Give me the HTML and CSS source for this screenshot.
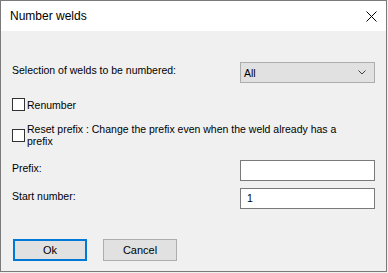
FILE: index.html
```html
<!DOCTYPE html>
<html lang="en">
<head>
    <meta charset="UTF-8">
    <title>Number welds</title>
    <link rel="stylesheet" href="styles.css">
</head>
<body>
    <div class="dialog">
        <div class="title-bar">
            <span class="title">Number welds</span>
            <svg class="close-btn" width="11" height="11" viewBox="0 0 11 11">
                <path d="M0.5 0.5 L10.5 10.5 M10.5 0.5 L0.5 10.5" stroke="#000" stroke-width="1" fill="none"/>
            </svg>
        </div>

        <div class="content">
            <div class="field-row select-row">
                <label class="field-label">Selection of welds to be numbered:</label>
                <div class="combo">
                    <span>All</span>
                    <svg class="chevron" width="8" height="5" viewBox="0 0 8 5">
                        <path d="M0.5 0.5 L4 4 L7.5 0.5" stroke="#404040" stroke-width="1" fill="none"/>
                    </svg>
                </div>
            </div>

            <div class="check-row first-check">
                <span class="check-box"></span>
                <span class="check-text">Renumber</span>
            </div>

            <div class="check-row second-check">
                <span class="check-box"></span>
                <span class="check-text">Reset prefix : Change the prefix even when the weld already has a prefix</span>
            </div>

            <div class="field-row prefix-row">
                <label class="field-label">Prefix:</label>
                <div class="text-input"></div>
            </div>

            <div class="field-row start-row">
                <label class="field-label">Start number:</label>
                <div class="text-input">1</div>
            </div>

            <div class="buttons">
                <button class="btn btn-default">Ok</button>
                <button class="btn">Cancel</button>
            </div>
        </div>
    </div>
</body>
</html>
```

FILE: styles.css
```css
html, body {
    margin: 0;
    padding: 0;
    background: #f0f0f0;
}

body {
    font-family: "Liberation Sans", Arial, sans-serif;
    font-size: 10.5px;
    color: #000;
}

.dialog {
    width: 387px;
    height: 272px;
    box-sizing: border-box;
    border: 1px solid #7a7a7a;
    background: #f0f0f0;
    display: flex;
    flex-direction: column;
}

.title-bar {
    height: 30px;
    background: #fff;
    display: flex;
    align-items: center;
    justify-content: space-between;
    padding: 0 9px 0 9px;
}

.title {
    font-size: 12px;
}

.content {
    padding: 0 11px 0 11px;
    display: flex;
    flex-direction: column;
}

.field-row {
    display: flex;
    justify-content: space-between;
    align-items: flex-start;
}

.field-label {
    line-height: 13px;
    padding-top: 2px;
}

.select-row {
    margin-top: 31px;
}

.combo {
    width: 135px;
    height: 21px;
    box-sizing: border-box;
    border: 1px solid #adadad;
    background: #e1e1e1;
    display: flex;
    align-items: center;
    justify-content: space-between;
    padding: 0 8px 0 3px;
}

.check-row {
    display: flex;
    align-items: flex-start;
}

.check-box {
    flex: none;
    width: 13px;
    height: 13px;
    box-sizing: border-box;
    border: 1px solid #333;
    background: #fff;
    margin-right: 2px;
}

.check-text {
    line-height: 12px;
}

.first-check {
    margin-top: 15px;
}

.first-check .check-text {
    padding-top: 1px;
}

.second-check {
    margin-top: 13px;
}

.second-check .check-box {
    margin-top: 5px;
}

.second-check .check-text {
    line-height: 11.5px;
    max-width: 330px;
}

.prefix-row {
    margin-top: 13px;
}

.start-row {
    margin-top: 7px;
}

.text-input {
    width: 135px;
    height: 21px;
    box-sizing: border-box;
    border: 1px solid #7a7a7a;
    background: #fff;
    padding: 3px 0 0 6px;
    line-height: 13px;
}

.buttons {
    display: flex;
    gap: 16px;
    margin-top: 30px;
    padding-left: 1px;
}

.btn {
    width: 74px;
    height: 22px;
    box-sizing: border-box;
    border: 1px solid #adadad;
    background: #e1e1e1;
    font-family: "Liberation Sans", Arial, sans-serif;
    font-size: 11px;
    color: #000;
    padding: 0;
}

.btn-default {
    border: 2px solid #0078d7;
}
```
